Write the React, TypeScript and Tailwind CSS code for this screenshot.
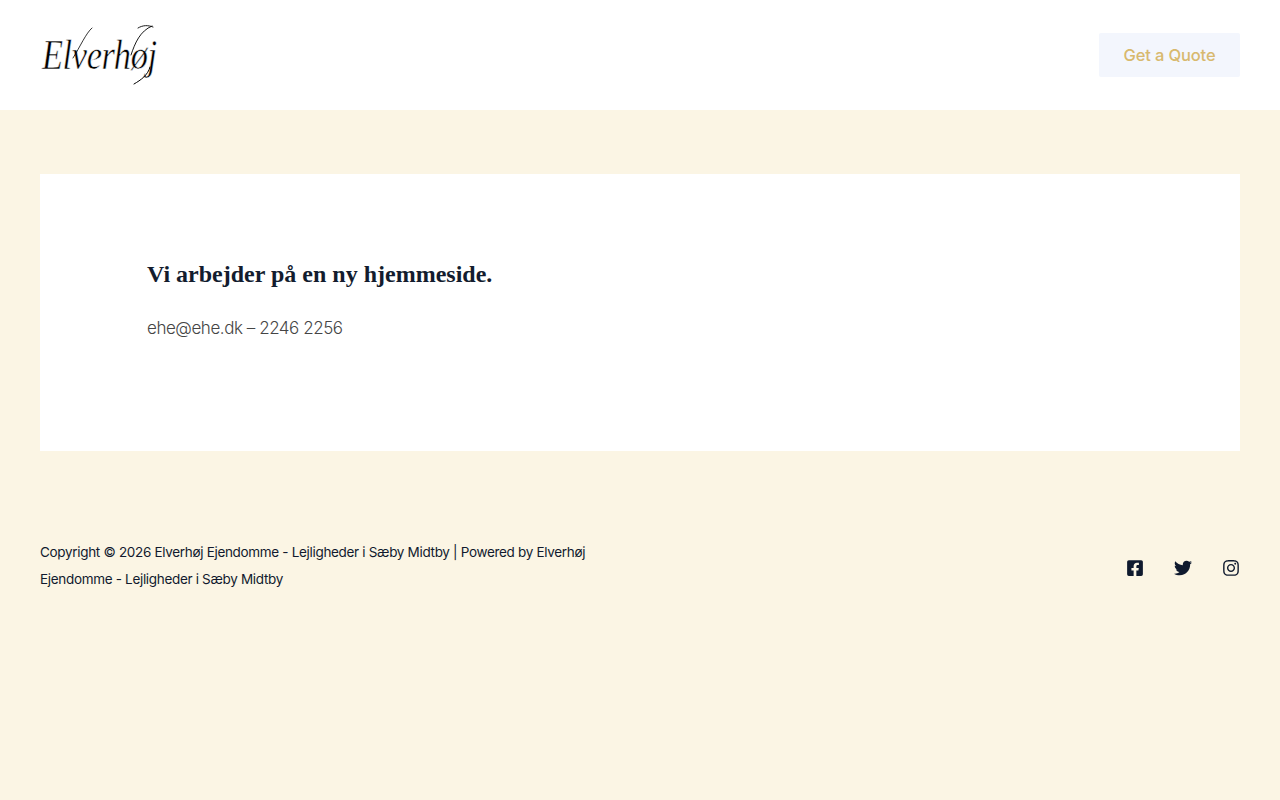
import React from "react";
import { FaFacebookSquare, FaTwitter, FaInstagram } from "react-icons/fa";

export default function App() {
  return (
    <div className="min-h-[800px] bg-[#fbf5e4] font-['Inter',sans-serif]">
      <header className="flex h-[110px] items-center justify-between bg-white px-10">
        <div className="relative h-[60px] w-[118px]">
          <span className="ml-[2px] block origin-left scale-x-[0.8] pt-[5px] font-['Liberation_Serif',serif] text-[43px] leading-[50px] tracking-[-0.5px] text-black italic [-webkit-text-stroke:0.55px_white]">
            Elverhøj
          </span>
          <svg className="absolute top-0 left-0" width="120" height="60" viewBox="0 0 120 60" fill="none" stroke="#000" strokeLinecap="round">
            <path d="M91 30 C95 18 100 6 112 1 M98 3 C103 0 108 0 113 2" strokeWidth="0.9" />
            <path d="M110 42 C108 50 101 55 94 59" strokeWidth="1" />
            <path d="M33 33 C40 22 46 8 52 3" strokeWidth="0.8" />
          </svg>
        </div>
        <a className="flex h-[44px] w-[141px] items-center justify-center rounded-[2px] bg-[#f3f6fd] text-[16.5px] font-medium tracking-[-0.15px] text-[#d8b96e]">
          Get a Quote
        </a>
      </header>
      <main className="px-10 pt-16">
        <section className="h-[277px] bg-white px-[107px] pt-[85px]">
          <h2 className="font-['Liberation_Serif',serif] text-[24px] leading-[30px] font-bold text-[#131c2e]">
            Vi arbejder på en ny hjemmeside.
          </h2>
          <p className="mt-[25px] text-[17px] leading-[28px] font-light tracking-[-0.45px] text-[#454545]">
            ehe@ehe.dk – 2246 2256
          </p>
        </section>
      </main>
      <footer className="flex items-center justify-between px-10 pt-[88px]">
        <p className="w-[550px] text-[13.5px] leading-[26.6px] tracking-[-0.32px] text-[#111a2e]">
          Copyright © 2026 Elverhøj Ejendomme - Lejligheder i Sæby Midtby | Powered by Elverhøj Ejendomme - Lejligheder i Sæby Midtby
        </p>
        <div className="flex items-center gap-[30px] pt-[5px] text-[#0f1a2e]">
          <FaFacebookSquare size={18} />
          <FaTwitter size={18} />
          <FaInstagram size={18} />
        </div>
      </footer>
    </div>
  );
}
